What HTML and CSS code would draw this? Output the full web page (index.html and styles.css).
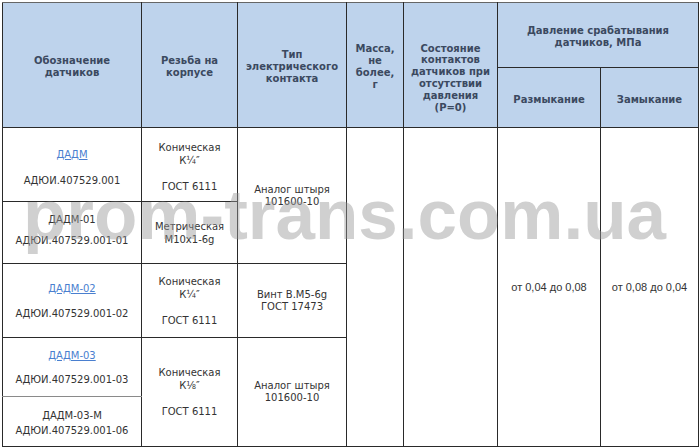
FILE: index.html
```html
<!DOCTYPE html>
<html lang="ru">
<head>
<meta charset="utf-8">
<title>ДАДМ</title>
<link rel="stylesheet" href="styles.css">
</head>
<body>
<div class="page">
<table class="spec">
<colgroup>
<col class="c1"><col class="c2"><col class="c3"><col class="c4"><col class="c5"><col class="c6"><col class="c7">
</colgroup>
<thead>
<tr class="h1">
<th rowspan="2">Обозначение<br>датчиков</th>
<th rowspan="2">Резьба на<br>корпусе</th>
<th rowspan="2">Тип<br>электрического<br>контакта</th>
<th rowspan="2">Масса,<br>не<br>более,<br>г</th>
<th rowspan="2" class="state">Состояние<br>контактов<br>датчиков при<br>отсутствии<br>давления<br>(P=0)</th>
<th colspan="2">Давление срабатывания<br>датчиков, МПа</th>
</tr>
<tr class="h2">
<th>Размыкание</th>
<th>Замыкание</th>
</tr>
</thead>
<tbody>
<tr class="r1">
<td class="name pt6"><div><a href="#">ДАДМ</a></div><div class="cd g13">АДЮИ.407529.001</div></td>
<td class="pt5">Коническая<br>К¼″<br><br>ГОСТ 6111</td>
<td rowspan="2" class="tight">Аналог штыря<br>101600-10</td>
<td rowspan="5"></td>
<td rowspan="5"></td>
<td rowspan="5" class="val">от 0,04 до 0,08</td>
<td rowspan="5" class="val">от 0,08 до 0,04</td>
</tr>
<tr class="r2">
<td class="name pb5"><div>ДАДМ-01</div><div class="cd g8">АДЮИ.407529.001-01</div></td>
<td>Метрическая<br>М10х1-6g</td>
</tr>
<tr class="r3">
<td class="name"><div><a href="#">ДАДМ-02</a></div><div class="cd g12">АДЮИ.407529.001-02</div></td>
<td>Коническая<br>К¼″<br><br>ГОСТ 6111</td>
<td class="tight">Винт В.М5-6g<br>ГОСТ 17473</td>
</tr>
<tr class="r4">
<td class="name soft-b"><div><a href="#">ДАДМ-03</a></div><div class="cd g11">АДЮИ.407529.001-03</div></td>
<td rowspan="2">Коническая<br>К⅛″<br><br>ГОСТ 6111</td>
<td rowspan="2" class="tight">Аналог штыря<br>101600-10</td>
</tr>
<tr class="r5">
<td class="name pt3"><div>ДАДМ-03-М</div><div class="cd g2">АДЮИ.407529.001-06</div></td>
</tr>
</tbody>
</table>
<div class="watermark">prom-trans.com.ua</div>
</div>
</body>
</html>
```
FILE: styles.css
```css
html, body {
  margin: 0;
  padding: 0;
  background: #ffffff;
}
.page {
  position: relative;
  padding: 2px 0 0 2px;
  width: 700px;
  height: 448px;
  box-sizing: border-box;
  overflow: hidden;
}
.spec {
  border-collapse: collapse;
  table-layout: fixed;
  width: 696px;
  font-family: "DejaVu Sans", Verdana, sans-serif;
  font-size: 10px;
  color: #333333;
}
.c1 { width: 139px; }
.c2 { width: 96px; }
.c3 { width: 109px; }
.c4 { width: 57px; }
.c5 { width: 94px; }
.c6 { width: 103px; }
.c7 { width: 98px; }
.spec th, .spec td {
  border: 1px solid #2a2a2a;
  text-align: center;
  vertical-align: middle;
  padding: 0 2px;
}
.spec th {
  background: #bed3ec;
  color: #3b4960;
  font-weight: bold;
  line-height: 11.8px;
  padding-top: 4px;
}
.spec thead tr.h1 th { border-top-color: #666666; }
.spec th.state { padding-top: 26px; }
.h1 { height: 65px; }
.h2 { height: 60px; }
.r1 { height: 74px; }
.r2 { height: 62px; }
.r3 { height: 74px; }
.r4 { height: 59px; }
.r5 { height: 50px; }
.spec td {
  line-height: 13px;
}
.spec td.tight { line-height: 12px; }
.spec td.val {
  font-family: "Liberation Sans", Arial, sans-serif;
  font-size: 11px;
  color: #333333;
}
.spec a {
  color: #4a7fcf;
  text-decoration: underline;
}
.g13 { margin-top: 13px; }
.g12 { margin-top: 12px; }
.g11 { margin-top: 11px; }
.g8 { margin-top: 8px; }
.g2 { margin-top: 2px; }
.spec td.pt6 { padding-top: 6px; }
.spec td.pt5 { padding-top: 5px; }
.spec td.pt3 { padding-top: 3px; }
.spec td.pb5 { padding-bottom: 5px; }
.spec td.soft-b { border-bottom-color: #8a8a8a; }
.watermark {
  position: absolute;
  left: 23px;
  top: 179px;
  font-family: "Liberation Sans", Arial, sans-serif;
  font-weight: bold;
  font-size: 71px;
  line-height: 1;
  white-space: nowrap;
  color: rgba(150, 150, 150, 0.45);
  pointer-events: none;
}
```
